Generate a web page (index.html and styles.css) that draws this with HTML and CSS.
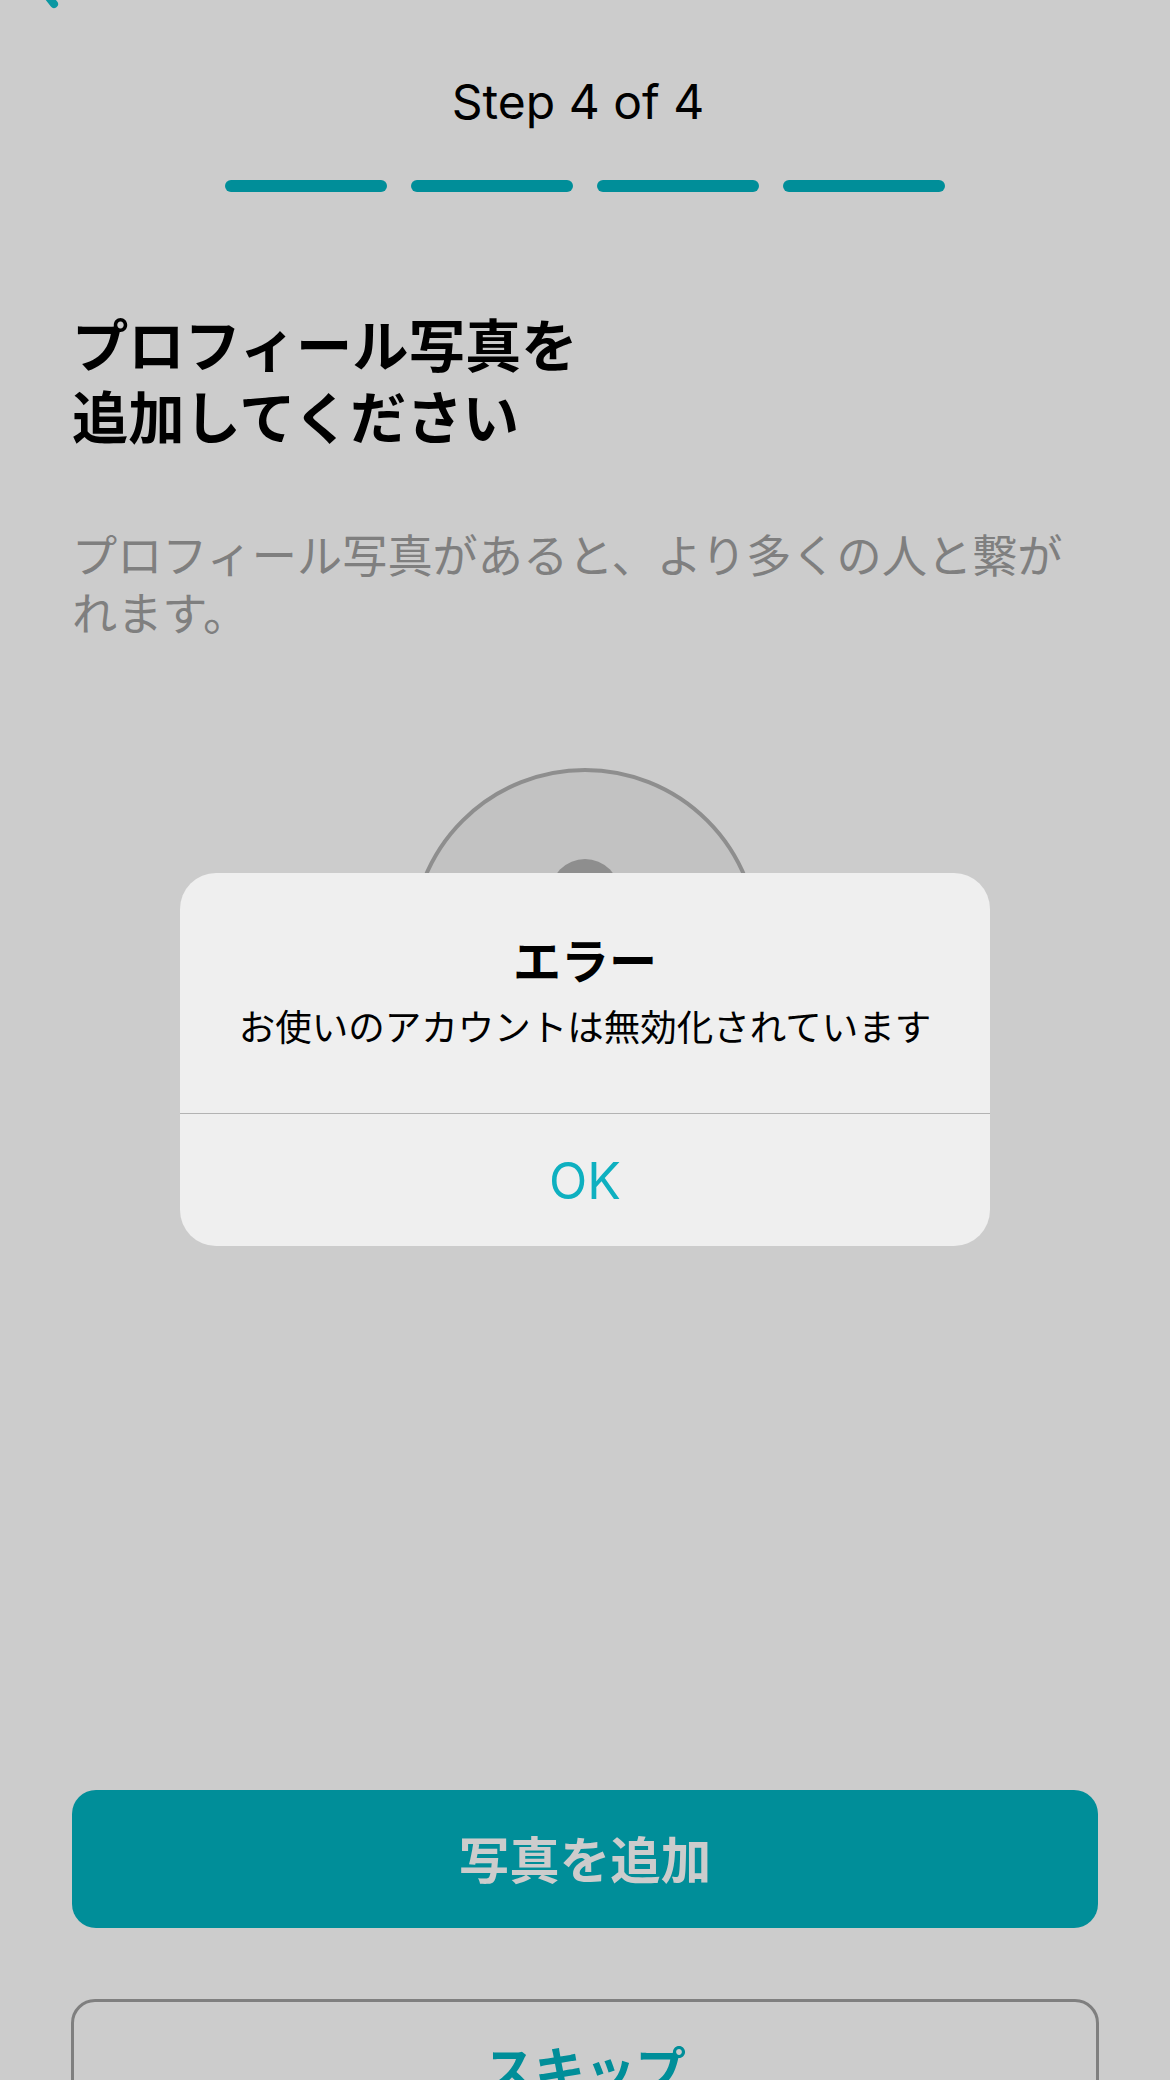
FILE: index.html
```html
<!DOCTYPE html>
<html lang="ja">
<head>
<meta charset="utf-8">
<title>Step 4 of 4</title>
<link rel="stylesheet" href="styles.css">
</head>
<body>
<main class="page">
  <div class="topbar">
    <svg class="back" width="40" height="12" viewBox="0 0 40 12" aria-hidden="true"><path d="M8 -10 L19 4" class="back-line"/></svg>
  </div>
  <p class="step">Step 4 of 4</p>
  <div class="progress">
    <span class="bar"></span><span class="bar"></span><span class="bar"></span><span class="bar"></span>
  </div>
  <h1 class="title">プロフィール写真を<br>追加してください</h1>
  <p class="desc">プロフィール写真があると、より多くの人と繋がれます。</p>
  <div class="avatar"><span class="head"></span></div>
  <div class="actions">
    <button class="btn btn-primary">写真を追加</button>
    <button class="btn btn-outline">スキップ</button>
  </div>
</main>
<div class="dialog" role="alertdialog">
  <div class="dialog-body">
    <h2 class="dialog-title">エラー</h2>
    <p class="dialog-msg">お使いのアカウントは無効化されています</p>
  </div>
  <div class="dialog-action">OK</div>
</div>
</body>
</html>
```
FILE: styles.css
```css
* { box-sizing: border-box; }
html, body { margin: 0; padding: 0; height: 2080px; overflow: hidden; }
body {
  position: relative;
  background: #cccccc;
  font-family: "Noto Sans CJK JP", sans-serif;
  color: #000;
}
.page { display: flex; flex-direction: column; height: 2080px; overflow: hidden; }
.page > * { flex: none; }
.topbar { height: 12px; padding-left: 35px; }
.back { display: block; }
.back-line { fill: none; stroke: #0a97a2; stroke-width: 8; stroke-linecap: round; }
.step { margin: 66px 0 0; height: 48px; line-height: 48px; text-align: center; font-size: 48px; padding-right: 14px; font-family: "Inter", sans-serif; }
.progress { display: flex; justify-content: center; gap: 24px; margin-top: 54px; }
.bar { width: 162px; height: 12px; border-radius: 6px; background: #008e99; }
.title { margin: 115px 0 0 72px; font-size: 56.3px; line-height: 72px; font-weight: 700; }
.desc { margin: 74px 72px 0; font-size: 45.2px; line-height: 58px; color: #7f7f7f; }
.avatar {
  width: 350px; height: 350px; margin: 127px auto 0; border: 4px solid #8e8e8e; border-radius: 50%;
  background: #c2c2c2; display: flex; justify-content: center; padding-top: 87px;
}
.head { width: 70px; height: 70px; border-radius: 50%; background: #8e8e8e; }
.actions { display: flex; flex-direction: column; gap: 71px; margin: 672px 71px 0; }
.btn { display: block; flex: none; border-radius: 24px; font-size: 50.5px; font-weight: 700; font-family: "Noto Sans CJK JP", sans-serif; padding: 0 0 5px; }
.btn-primary { width: calc(100% - 2px); height: 138px; margin: 0 1px; background: #008e99; border: none; color: #cccccc; }
.btn-outline { width: 100%; height: 140px; background: transparent; border: 3px solid #7f7f7f; color: #008e99; }
.dialog {
  position: absolute; left: 180px; top: 873px; width: 810px; height: 373px;
  border-radius: 36px; background: #efefef; display: flex; flex-direction: column;
}
.dialog-body { height: 241px; border-bottom: 1px solid #b3b3b3; text-align: center; padding-top: 55px; }
.dialog-title { margin: 0; font-size: 48px; line-height: 60px; font-weight: 700; }
.dialog-msg { margin: 10px 0 0; font-size: 36.5px; line-height: 56px; }
.dialog-action { flex: 1; display: flex; align-items: center; justify-content: center; font-size: 50px; padding-top: 2px; color: #0eb0c0; font-family: "Inter", sans-serif; }
```
